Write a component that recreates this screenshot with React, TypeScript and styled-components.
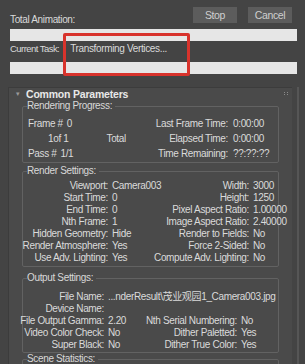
import React from "react";
import styled, { createGlobalStyle } from "styled-components";

const GlobalStyle = createGlobalStyle`
  html, body {
    margin: 0;
    padding: 0;
    background: #444444;
  }
  body {
    font-family: "Liberation Sans", Arial, "Noto Sans CJK SC", sans-serif;
    font-size: 10px;
    letter-spacing: -0.35px;
    color: #dadada;
    width: 305px;
    height: 364px;
    overflow: hidden;
  }
`;

const renderRows = [
  ["Viewport:", "Camera003", "Width:", "3000"],
  ["Start Time:", "0", "Height:", "1250"],
  ["End Time:", "0", "Pixel Aspect Ratio:", "1.00000"],
  ["Nth Frame:", "1", "Image Aspect Ratio:", "2.40000"],
  ["Hidden Geometry:", "Hide", "Render to Fields:", "No"],
  ["Render Atmosphere:", "Yes", "Force 2-Sided:", "No"],
  ["Use Adv. Lighting:", "Yes", "Compute Adv. Lighting:", "No"],
];

const outputRows = [
  ["File Output Gamma:", "2.20", "Nth Serial Numbering:", "No"],
  ["Video Color Check:", "No", "Dither Paletted:", "Yes"],
  ["Super Black:", "No", "Dither True Color:", "Yes"],
];

const App: React.FC = () => {
  return (
    <Page>
      <GlobalStyle />
      <Top>
        <HeadRow>
          <TopLabel>Total Animation:</TopLabel>
          <Buttons>
            <Button>Stop</Button>
            <Button>Cancel</Button>
          </Buttons>
        </HeadRow>
        <Bar />
        <TaskRow>
          <TaskLabel>Current Task:</TaskLabel>
          <span>Transforming Vertices...</span>
        </TaskRow>
        <Bar />
        <Highlight />
      </Top>

      <PanelArea>
        <Rollout>
          <RolloutHeader>
            <Arrow>▾</Arrow>
            <HeaderTitle>Common Parameters</HeaderTitle>
            <Grip>
              <svg width="5" height="4" viewBox="0 0 5 4">
                <rect x="0" y="0" width="1" height="1" fill="#8a8a8a" />
                <rect x="3" y="0" width="1" height="1" fill="#8a8a8a" />
                <rect x="0" y="2" width="1" height="1" fill="#8a8a8a" />
                <rect x="3" y="2" width="1" height="1" fill="#8a8a8a" />
              </svg>
            </Grip>
          </RolloutHeader>

          <Groups>
            <Group $pt={4} $pb={1} $mt={0}>
              <Legend>Rendering Progress:</Legend>
              <ProgressGrid>
                <ProgressLeft $indent={0}>
                  <span>Frame #</span>
                  <span>0</span>
                </ProgressLeft>
                <RightLabel>Last Frame Time:</RightLabel>
                <span>0:00:00</span>

                <ProgressLeft $indent={20}>
                  <span>1of 1</span>
                  <TotalText>Total</TotalText>
                </ProgressLeft>
                <RightLabel>Elapsed Time:</RightLabel>
                <span>0:00:00</span>

                <ProgressLeft $indent={0}>
                  <span>Pass #</span>
                  <span>1/1</span>
                </ProgressLeft>
                <RightLabel>Time Remaining:</RightLabel>
                <span>??:??:??</span>
              </ProgressGrid>
            </Group>

            <Group $pt={3} $pb={2} $mt={2}>
              <Legend>Render Settings:</Legend>
              <SettingsGrid $cols="80px 32px 101px 1fr">
                {renderRows.map((row, i) => (
                  <React.Fragment key={i}>
                    <RightLabel>{row[0]}</RightLabel>
                    <Value>{row[1]}</Value>
                    <RightLabel>{row[2]}</RightLabel>
                    <Value>{row[3]}</Value>
                  </React.Fragment>
                ))}
              </SettingsGrid>
            </Group>

            <Group $pt={7} $pb={1} $mt={5}>
              <Legend>Output Settings:</Legend>
              <SettingsGrid $cols="76px 38px 87px 1fr">
                <RightLabel>File Name:</RightLabel>
                <WideValue>...nderResult\茂业观园1_Camera003.jpg</WideValue>
                <RightLabel>Device Name:</RightLabel>
                <WideValue />
                {outputRows.map((row, i) => (
                  <React.Fragment key={i}>
                    <RightLabel>{row[0]}</RightLabel>
                    <Value>{row[1]}</Value>
                    <RightLabel>{row[2]}</RightLabel>
                    <Value>{row[3]}</Value>
                  </React.Fragment>
                ))}
              </SettingsGrid>
            </Group>

            <Group $pt={4} $pb={4} $mt={0}>
              <Legend>Scene Statistics:</Legend>
            </Group>
          </Groups>
        </Rollout>
        <Scrollbar />
      </PanelArea>
    </Page>
  );
};

export default App;

const Page = styled.div`
  width: 305px;
  height: 364px;
  background: #444444;
  display: flex;
  flex-direction: column;
  overflow: hidden;
`;

const Top = styled.div`
  position: relative;
  display: flex;
  flex-direction: column;
  padding: 7px 8px 0 10px;
`;

const HeadRow = styled.div`
  display: flex;
  justify-content: space-between;
  align-items: flex-start;
  height: 18px;
`;

const TopLabel = styled.span`
  padding-top: 7px;
  line-height: 12px;
`;

const Buttons = styled.div`
  display: flex;
  gap: 11px;
  margin-right: 5px;
`;

const Button = styled.div`
  width: 44px;
  height: 16px;
  background: #5c5c5c;
  color: #cfcfcf;
  display: flex;
  align-items: center;
  justify-content: center;
  font-size: 10.5px;
`;

const Bar = styled.div`
  height: 12px;
  background: #e6e6e6;
  margin-top: 4px;

  & + & {
    margin-top: 0;
  }
`;

const TaskRow = styled.div`
  display: flex;
  gap: 11px;
  padding: 2px 0 3px;
  line-height: 12px;
`;

const TaskLabel = styled.span`
  font-size: 9.5px;
  letter-spacing: -0.55px;
`;

const Highlight = styled.div`
  position: absolute;
  left: 63px;
  top: 33px;
  width: 121px;
  height: 37px;
  border: 3px solid #d8332c;
  border-radius: 2px;
  pointer-events: none;
`;

const PanelArea = styled.div`
  display: flex;
  margin-top: 13px;
  padding-left: 8px;
  flex: 1;
`;

const Rollout = styled.div`
  width: 284px;
  background: #4a4a4a;
  border-top: 1px solid #3c3c3c;
  border-left: 1px solid #3c3c3c;
  box-sizing: border-box;
  padding: 0 13px 0 13px;
  display: flex;
  flex-direction: column;
`;

const Scrollbar = styled.div`
  width: 2px;
  margin-left: 5px;
  background: #565656;
`;

const RolloutHeader = styled.div`
  position: relative;
  display: flex;
  align-items: center;
  height: 12px;
  margin-left: -6px;
`;

const Arrow = styled.span`
  font-size: 7px;
  color: #9a9a9a;
  width: 10px;
`;

const HeaderTitle = styled.span`
  font-weight: bold;
  font-size: 10.5px;
  letter-spacing: -0.2px;
  color: #e8e8e8;
`;

const Grip = styled.span`
  position: absolute;
  right: -10px;
  top: 4px;
  display: flex;
`;

const Groups = styled.div`
  display: flex;
  flex-direction: column;
`;

const Group = styled.fieldset<{ $pt: number; $pb: number; $mt: number }>`
  margin: ${(p) => p.$mt}px 0 0;
  padding: ${(p) => p.$pt}px 4px ${(p) => p.$pb}px 5px;
  border: 1px solid #626262;
  border-radius: 2px;
  min-width: 0;
`;

const Legend = styled.legend`
  padding: 0 3px 0 0;
  margin-left: -1px;
  line-height: 12px;
  color: #d8d8d8;
`;

const ProgressGrid = styled.div`
  display: grid;
  grid-template-columns: 120px 75px 1fr;
  column-gap: 5px;
  grid-auto-rows: 15px;
  align-items: center;
  white-space: nowrap;
`;

const ProgressLeft = styled.div<{ $indent: number }>`
  display: flex;
  gap: 4px;
  padding-left: ${(p) => p.$indent}px;
`;

const TotalText = styled.span`
  margin-left: 34px;
`;

const SettingsGrid = styled.div<{ $cols: string }>`
  display: grid;
  grid-template-columns: ${(p) => p.$cols};
  column-gap: 4px;
  grid-auto-rows: 12px;
  line-height: 12px;
  white-space: nowrap;
`;

const RightLabel = styled.span`
  display: flex;
  justify-content: flex-end;
`;

const Value = styled.span`
  overflow: visible;
`;

const WideValue = styled.span`
  grid-column: 2 / span 3;
`;
